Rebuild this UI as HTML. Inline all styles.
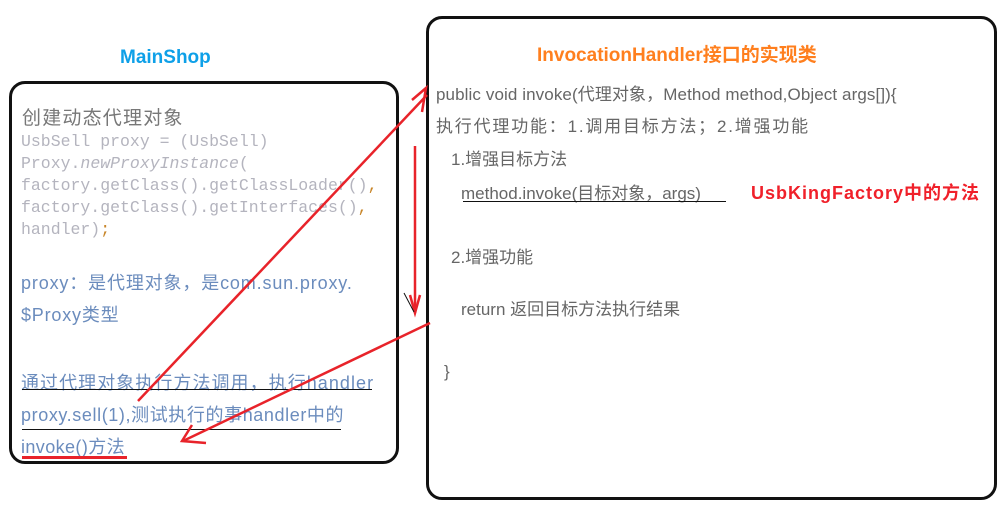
<!DOCTYPE html>
<html><head><meta charset="utf-8"><style>
body{margin:0;width:1004px;height:518px;background:#fff;position:relative;overflow:hidden;font-family:"Liberation Sans","Noto Sans CJK SC",sans-serif;}
.t{position:absolute;white-space:nowrap;font-size:17px;color:#666;}
.m{position:absolute;white-space:nowrap;font-family:"Liberation Mono","Noto Sans CJK SC",monospace;font-size:16.5px;color:#b4b4be;}
.b{color:#6b8cbd;font-size:18px;letter-spacing:0.8px}
.box{position:absolute;border:3px solid #111;border-radius:16px;}
</style></head><body>
<div class="box" style="left:9px;top:81px;width:384px;height:377px"></div>
<div class="box" style="left:426px;top:16px;width:565px;height:478px"></div>
<div class="t" style="left:120px;top:47px;color:#0ea0e8;font-weight:bold;font-size:19px">MainShop</div>
<div class="t" style="left:22px;top:103px;font-size:19px;color:#777;letter-spacing:1.2px">创建动态代理对象</div>
<div class="m" style="left:21px;top:132px">UsbSell proxy = (UsbSell)</div>
<div class="m" style="left:21px;top:154px">Proxy.<i>newProxyInstance</i>(</div>
<div class="m" style="left:21px;top:176px">factory.getClass().getClassLoader()<span style="color:#c8862a">,</span></div>
<div class="m" style="left:21px;top:198px">factory.getClass().getInterfaces()<span style="color:#c8862a">,</span></div>
<div class="m" style="left:21px;top:220px">handler)<span style="color:#c8862a">;</span></div>
<div class="t b" style="left:21px;top:269px;letter-spacing:0.85px">proxy：是代理对象，是com.sun.proxy.</div>
<div class="t b" style="left:21px;top:301px">$Proxy类型</div>
<div class="t b" style="left:21px;top:369px;letter-spacing:1.05px">通过代理对象执行方法调用，执行handler</div>
<div style="position:absolute;left:22px;top:389px;width:350px;height:1px;background:#111"></div>
<div class="t b" style="left:21px;top:401px;letter-spacing:0.6px">proxy.sell(1),测试执行的事handler中的</div>
<div style="position:absolute;left:22px;top:429px;width:319px;height:1px;background:#111"></div>
<div class="t b" style="left:21px;top:433px;letter-spacing:0.4px">invoke()方法</div>
<div style="position:absolute;left:22px;top:456px;width:105px;height:3px;background:#e8232a"></div>

<div class="t" style="left:537px;top:40px;color:#ff7f1e;font-weight:bold;font-size:19px">InvocationHandler接口的实现类</div>
<div class="t" style="left:436px;top:80px;letter-spacing:0.1px">public void invoke(代理对象，Method method,Object args[]){</div>
<div class="t" style="left:436px;top:112px;letter-spacing:1.8px">执行代理功能：1.调用目标方法；2.增强功能</div>
<div class="t" style="left:451px;top:145px">1.增强目标方法</div>
<div class="t" style="left:461px;top:179px">method.invoke(目标对象，args)</div>
<div style="position:absolute;left:463px;top:201px;width:263px;height:1px;background:#111"></div>
<div class="t" style="left:751px;top:179px;color:#f0202a;font-weight:bold;font-size:18px;letter-spacing:1px">UsbKingFactory中的方法</div>
<div class="t" style="left:451px;top:243px">2.增强功能</div>
<div class="t" style="left:461px;top:295px">return 返回目标方法执行结果</div>
<div class="t" style="left:444px;top:362px">}</div>

<svg width="1004" height="518" style="position:absolute;left:0;top:0" fill="none" stroke="#e8232a" stroke-width="2.5">
<path d="M138 401 L427 95"/>
<path d="M412 100 L426 88 L422 112"/>
<path d="M415 146 L415 313"/>
<path d="M410 295 L415 313 L420 295"/>
<path d="M430 323 L183 441"/>
<path d="M192 425 L182 441 L206 443"/>
<path d="M404 293 L414 312" stroke="#111" stroke-width="1"/>
</svg>
</body></html>
